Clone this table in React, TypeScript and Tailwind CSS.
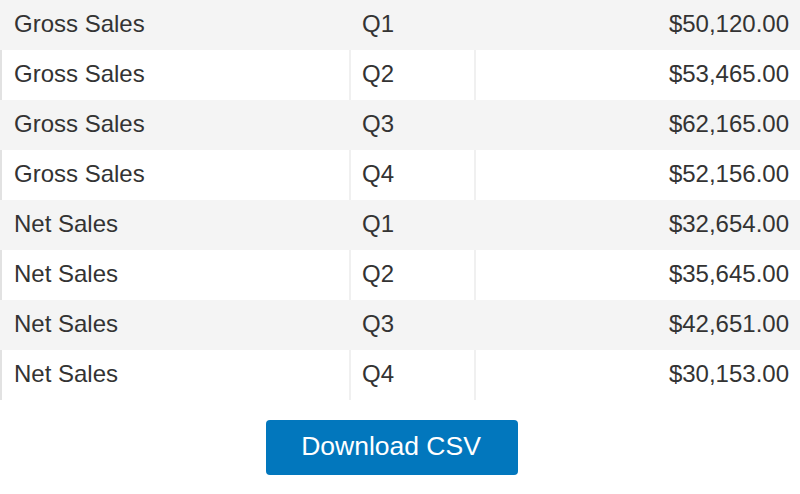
import React from "react";

const rows: [string, string, string][] = [
  ["Gross Sales", "Q1", "$50,120.00"],
  ["Gross Sales", "Q2", "$53,465.00"],
  ["Gross Sales", "Q3", "$62,165.00"],
  ["Gross Sales", "Q4", "$52,156.00"],
  ["Net Sales", "Q1", "$32,654.00"],
  ["Net Sales", "Q2", "$35,645.00"],
  ["Net Sales", "Q3", "$42,651.00"],
  ["Net Sales", "Q4", "$30,153.00"],
];

export default function App() {
  return (
    <div
      className="w-[800px] h-[494px] bg-white text-[#333333]"
      style={{ fontFamily: '"Liberation Sans", Arial, sans-serif' }}
    >
      <div className="flex flex-col">
        {rows.map((r, i) => {
          const odd = i % 2 === 0;
          return (
            <div
              key={i}
              className={`flex h-[50px] gap-[2px] border-l-2 ${
                odd ? "bg-[#f4f4f4] border-[#f4f4f4]" : "bg-[#f0f0f0] border-[#e2e2e2]"
              }`}
            >
              <div
                className={`w-[347px] flex items-center pl-[12px] pb-[3px] text-[24px] ${
                  odd ? "bg-[#f4f4f4]" : "bg-white"
                }`}
              >
                {r[0]}
              </div>
              <div
                className={`w-[123px] flex items-center pl-[11px] pb-[3px] text-[24px] ${
                  odd ? "bg-[#f4f4f4]" : "bg-white"
                }`}
              >
                {r[1]}
              </div>
              <div
                className={`flex-1 flex items-center justify-end pr-[11px] pb-[3px] text-[24px] ${
                  odd ? "bg-[#f4f4f4]" : "bg-white"
                }`}
              >
                {r[2]}
              </div>
            </div>
          );
        })}
      </div>
      <div className="flex justify-center pr-[16px] pt-[20px]">
        <button className="w-[252px] h-[55px] rounded-[4px] bg-[#0277bd] text-white text-[26.5px] flex items-center justify-center pb-[2px] pr-[2px]">
          Download CSV
        </button>
      </div>
    </div>
  );
}
